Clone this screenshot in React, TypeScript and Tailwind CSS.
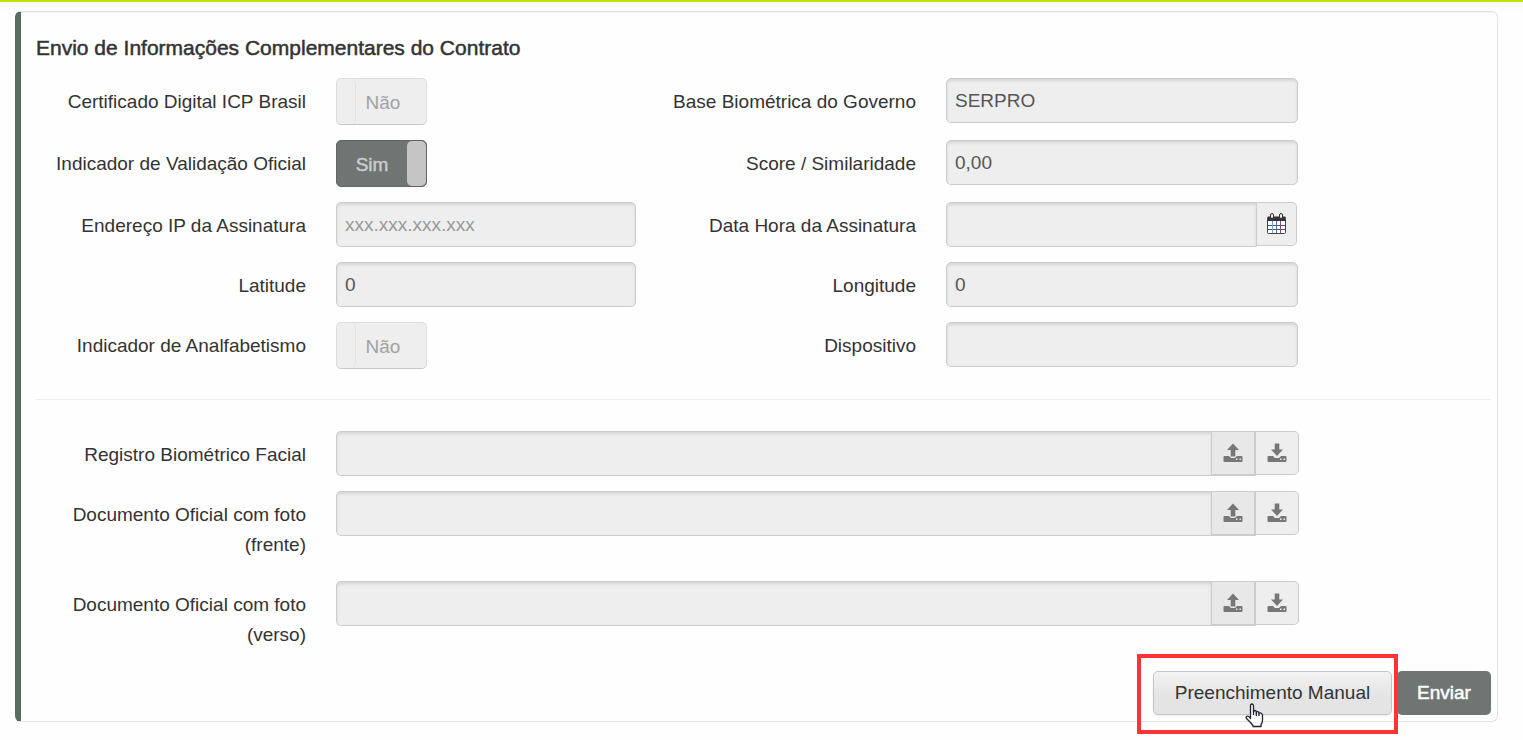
import { useState } from "react";
import type { ReactNode } from "react";

const FIELD =
  "h-[45px] w-full min-w-0 border border-[#ccc] bg-[#eee] px-2 text-[19px] text-[#555] placeholder:text-[#999] shadow-[inset_0_2px_3px_rgba(0,0,0,0.1)] outline-none";

function CalendarIcon() {
  return (
    <svg width="20" height="22" viewBox="0 0 20 22" aria-hidden="true">
      <rect x="0.5" y="4.5" width="18" height="16" rx="1" fill="#fff" stroke="#444" />
      <path d="M1 3.500h17q0.500 0 0.500 0.500v4h-18V4q0-0.500 0.500-0.500z" fill="#333" />
      <path d="M1 12.500h17M1 16.500h17" stroke="#555" />
      <path d="M5.500 8v12" stroke="#6ea6d8" />
      <path d="M9.500 8v12" stroke="#556ab0" />
      <path d="M13.500 8v12" stroke="#8a4a7e" />
      <rect x="3.500" y="0.500" width="3" height="5" rx="1.500" fill="#eee" stroke="#333" />
      <rect x="12.500" y="0.500" width="3" height="5" rx="1.500" fill="#eee" stroke="#333" />
    </svg>
  );
}

function DriveIcon({ up }: { up?: boolean }) {
  return (
    <svg width="20" height="20" viewBox="0 0 20 20" fill="#777" aria-hidden="true">
      {up ? <path d="M10 0.500L16 7h-3.700v6.500H7.700V7H4z" /> : <path d="M10 13L16 6.500h-3.700V0.500H7.700v6H4z" />}
      <path
        fillRule="evenodd"
        d="M1.500 13H6l1.500 1.500q0.500 0.500 1 0.500h3q0.500 0 1-0.500L14 13h4.500q1 0 1 1v4q0 1-1 1h-17q-1 0-1-1v-4q0-1 1-1zM13 15.500V17h1.500v-1.500zM16.500 15.500V17H18v-1.500z"
      />
    </svg>
  );
}

function HandCursor() {
  return (
    <svg
      className="pointer-events-none absolute top-8 left-[92px]"
      width="19"
      height="25"
      viewBox="0 0 19 25"
      aria-hidden="true"
    >
      <path
        d="M5.500 15.500V3Q5.500 1 7 1t1.500 2v6q0-1.500 1.400-1.500T11.300 9v1q0-1.300 1.300-1.300T14 10v1q0-1.200 1.400-1.200T17.500 12v5q0 3-1.500 4.500V23.500H8V22.500L5 19l-3.500-3.500Q0.500 14 2 13.200t3.500 2.300z"
        fill="#fff"
        stroke="#223"
        strokeWidth="1.300"
        strokeLinejoin="round"
      />
      <path d="M8.500 8.500V12M11.300 9.500V13M14 10.500V13" stroke="#223" strokeWidth="1.300" />
    </svg>
  );
}

function FieldLabel({ id, children }: { id: string; children: ReactNode }) {
  return (
    <label htmlFor={id} className="pt-[9px] pb-[6px] text-right text-[19px] leading-[30px]">
      {children}
    </label>
  );
}

function Toggle({ id, on }: { id: string; on?: boolean }) {
  return (
    <label
      htmlFor={id}
      className={`relative flex h-[47px] w-[91px] overflow-hidden rounded-[5px] border ${
        on ? "border-[#606562] bg-[#6f7572]" : "border-[#ddd] border-b-[#c8c8c8] bg-[#eee]"
      }`}
    >
      <input id={id} type="checkbox" className="sr-only" defaultChecked={on} disabled />
      {on ? (
        <>
          <span className="flex-1 pt-px text-center text-[19px] leading-[45px] text-[#c9cbca] [-webkit-text-stroke:0.5px]">
            Sim
          </span>
          <span className="w-[19px] rounded-[5px] bg-[#c4c5c4]" />
        </>
      ) : (
        <>
          <span className="w-[19px] rounded-r-[5px] border-r border-[#e3e3e3]" />
          <span className="flex-1 pt-px pr-4 text-center text-[19px] leading-[45px] text-[#a2a2a2]">Não</span>
        </>
      )}
    </label>
  );
}

function FileRow({ id, children }: { id: string; children: ReactNode }) {
  return (
    <div className="grid max-w-[1263px] grid-cols-[270px_minmax(0,1fr)] gap-x-[30px]">
      <FieldLabel id={id}>{children}</FieldLabel>
      <div className="flex items-start">
        <input id={id} type="text" className={`${FIELD} flex-1 rounded-l-[5px] border-r-0`} disabled />
        <button
          type="button"
          aria-label="Enviar arquivo"
          className="flex h-[45px] w-[45px] items-center justify-center border border-r-2 border-b-2 border-[#ccc] bg-[#e8e8e8]"
          disabled
        >
          <DriveIcon up />
        </button>
        <button
          type="button"
          aria-label="Baixar arquivo"
          className="flex h-11 w-[43px] items-center justify-center rounded-r-[5px] border border-l-0 border-[#ccc] bg-[#eee]"
          disabled
        >
          <DriveIcon />
        </button>
      </div>
    </div>
  );
}

export default function App() {
  const [ip, setIp] = useState("");

  return (
    <div className="min-h-screen border-t-2 border-[#bfe600] bg-[#fefefe] bg-linear-to-b from-[#f8f8f8] to-[#fefefe] to-[9px] font-['Liberation_Sans',Arial,sans-serif] text-[#333]">
      <main className="mt-[9px] mr-[25px] ml-[15px] rounded-[6px] border border-l-[6px] border-[#e3e3e3] border-l-[#586c62] bg-[#fefefe] pt-5 pr-[6px] pb-[6px] pl-[15px] shadow-[inset_0_1px_1px_rgba(0,0,0,0.05)]">
        <h1 className="mb-[15px] text-[21px] leading-[31px] [-webkit-text-stroke:0.5px]">
          Envio de Informações Complementares do Contrato
        </h1>

        <form onSubmit={(e) => e.preventDefault()}>
          <div className="grid grid-cols-[270px_300px_250px_minmax(0,352px)] items-start gap-x-[30px] gap-y-[15px]">
            <FieldLabel id="icp">Certificado Digital ICP Brasil</FieldLabel>
            <Toggle id="icp" />
            <FieldLabel id="base">Base Biométrica do Governo</FieldLabel>
            <input id="base" type="text" defaultValue="SERPRO" className={`${FIELD} rounded-[5px]`} disabled />

            <FieldLabel id="validacao">Indicador de Validação Oficial</FieldLabel>
            <Toggle id="validacao" on />
            <FieldLabel id="score">Score / Similaridade</FieldLabel>
            <input id="score" type="text" defaultValue="0,00" className={`${FIELD} rounded-[5px]`} disabled />

            <FieldLabel id="ip">Endereço IP da Assinatura</FieldLabel>
            <input
              id="ip"
              type="text"
              value={ip}
              onChange={(e) => setIp(e.target.value)}
              placeholder="xxx.xxx.xxx.xxx"
              className={`${FIELD} rounded-[5px]`}
              disabled
            />
            <FieldLabel id="data">Data Hora da Assinatura</FieldLabel>
            <div className="flex items-start pr-px">
              <input id="data" type="text" className={`${FIELD} flex-1 rounded-l-[5px]`} disabled />
              <button
                type="button"
                aria-label="Calendário"
                className="flex h-11 w-10 items-center justify-center rounded-r-[5px] border border-l-0 border-[#ccc] bg-[#eee]"
                disabled
              >
                <CalendarIcon />
              </button>
            </div>

            <FieldLabel id="latitude">Latitude</FieldLabel>
            <input id="latitude" type="text" defaultValue="0" className={`${FIELD} rounded-[5px]`} disabled />
            <FieldLabel id="longitude">Longitude</FieldLabel>
            <input id="longitude" type="text" defaultValue="0" className={`${FIELD} rounded-[5px]`} disabled />

            <FieldLabel id="analfabetismo">Indicador de Analfabetismo</FieldLabel>
            <Toggle id="analfabetismo" />
            <FieldLabel id="dispositivo">Dispositivo</FieldLabel>
            <input id="dispositivo" type="text" className={`${FIELD} rounded-[5px]`} disabled />
          </div>

          <hr className="mt-[30px] mb-[31px] border-[#eee]" />

          <div className="flex flex-col gap-[15px]">
            <FileRow id="facial">Registro Biométrico Facial</FileRow>
            <FileRow id="frente">
              Documento Oficial com foto
              <br />
              (frente)
            </FileRow>
            <FileRow id="verso">
              Documento Oficial com foto
              <br />
              (verso)
            </FileRow>
          </div>

          <div className="mt-[15px] flex justify-end gap-[5px]">
            <div className="relative">
              <button
                type="button"
                className="h-11 w-[239px] rounded-[5px] border border-[#c5c5c5] bg-linear-to-b from-[#f2f2f2] to-[#e4e4e4] to-60% text-[19px] shadow-[0_1px_2px_rgba(0,0,0,0.08)]"
              >
                Preenchimento Manual
              </button>
              <HandCursor />
              <div className="pointer-events-none absolute -top-[17px] -right-[6px] -bottom-[19px] -left-4 z-10 border-4 border-[#ff3333]" />
            </div>
            <button
              type="submit"
              className="h-11 w-[94px] rounded-[5px] bg-[#6f7572] text-[19px] text-white [-webkit-text-stroke:0.5px]"
            >
              Enviar
            </button>
          </div>
        </form>
      </main>
    </div>
  );
}
